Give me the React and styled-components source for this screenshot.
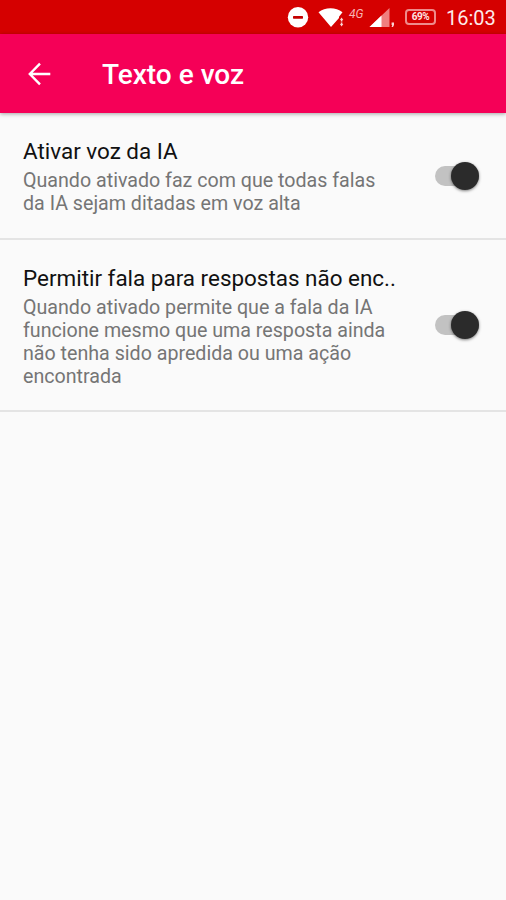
import React, { useState } from "react";
import styled, { createGlobalStyle } from "styled-components";

const settings = [
  {
    id: "voice",
    title: "Ativar voz da IA",
    lines: ["Quando ativado faz com que todas falas", "da IA sejam ditadas em voz alta"],
    height: 127,
  },
  {
    id: "fallback",
    title: "Permitir fala para respostas não enc..",
    lines: [
      "Quando ativado permite que a fala da IA",
      "funcione mesmo que uma resposta ainda",
      "não tenha sido apredida ou uma ação",
      "encontrada",
    ],
    height: 172,
  },
];

const SettingRow = ({ title, lines, height }) => {
  const [on, setOn] = useState(true);
  return (
    <Row $height={height}>
      <RowText>
        <RowTitle>{title}</RowTitle>
        {lines.map((line) => (
          <RowLine key={line}>{line}</RowLine>
        ))}
      </RowText>
      <Switch role="switch" aria-checked={on} aria-label={title} onClick={() => setOn(!on)}>
        <Track $on={on}>
          <Thumb />
        </Track>
      </Switch>
    </Row>
  );
};

const App = () => {
  return (
    <Screen>
      <GlobalStyle />
      <StatusBar>
        <DisturbIcon width="22" height="22" viewBox="0 0 22 22">
          <circle cx="11" cy="11.3" r="10.2" fill="#fff" />
          <rect x="6" y="9.9" width="10" height="2.8" rx="0.6" fill="#c40000" />
        </DisturbIcon>
        <WifiIcon width="27" height="20" viewBox="0 0 27 20">
          <path d="M0.5 5.2C7-0.2 18-0.2 24.5 5.2L21 9.8V11L13 20Z" fill="#fff" />
          <path d="M23.6 10.5L25.3 13H24.4V14.6H22.8V13H21.9ZM23.6 19.5L21.9 17H22.8V15.6H24.4V17H25.3Z" fill="#fbd5d5" />
        </WifiIcon>
        <Network>4G</Network>
        <SignalIcon width="27" height="20" viewBox="0 0 27 20">
          <path d="M20.5 1V20H0.5Z" fill="#f07f7f" />
          <path d="M12.5 8.6V20H0.5Z" fill="#fff" />
          <path d="M22.6 15.5H25V18L24 20H22.6L23.2 18H22.6Z" fill="#fbd5d5" />
        </SignalIcon>
        <Battery>69%</Battery>
        <Clock>16:03</Clock>
      </StatusBar>
      <Header>
        <BackButton aria-label="Voltar">
          <svg width="24" height="24" viewBox="0 0 24 24" fill="none" stroke="#fff" strokeWidth="2.4">
            <path d="M23.3 12H3M13 1.6L2.8 12L13 22.4" />
          </svg>
        </BackButton>
        <HeaderTitle>Texto e voz</HeaderTitle>
      </Header>
      <main>
        {settings.map((item) => (
          <SettingRow key={item.id} {...item} />
        ))}
      </main>
    </Screen>
  );
};

export default App;

const GlobalStyle = createGlobalStyle`
  * {
    box-sizing: border-box;
  }

  body {
    margin: 0;
    background: #fafafa;
    font-family: Roboto, "Liberation Sans", sans-serif;
  }

  button {
    border: 0;
    padding: 0;
    background: none;
  }
`;

const Screen = styled.div`
  width: 506px;
  height: 900px;
  background: #fafafa;
  overflow: hidden;
`;

const StatusBar = styled.div`
  display: flex;
  align-items: center;
  height: 34px;
  padding-left: 287px;
  background: #d50000;
  color: #fff;
`;

const DisturbIcon = styled.svg`
  flex: none;
  margin-right: 9px;
`;

const WifiIcon = styled.svg`
  flex: none;
  margin-right: 4px;
`;

const Network = styled.span`
  width: 17px;
  margin: 0 3px 6px 0;
  color: #f7b4b4;
  font-size: 12px;
  font-style: italic;
  line-height: 12px;
`;

const SignalIcon = styled.svg`
  flex: none;
  margin-right: 9px;
`;

const Battery = styled.div`
  display: flex;
  flex: none;
  align-items: center;
  justify-content: center;
  width: 31px;
  height: 16px;
  margin-right: 10px;
  border: 2px solid #ee8c8c;
  border-radius: 4px;
  color: #fde4e4;
  font-size: 10px;
  font-weight: 700;
  letter-spacing: -0.5px;
  line-height: 10px;
`;

const Clock = styled.span`
  padding-top: 2px;
  color: #fdeaea;
  font-size: 20px;
  line-height: 24px;
`;

const Header = styled.header`
  display: flex;
  align-items: center;
  height: 79px;
  padding-left: 27px;
  background: #f50057;
  box-shadow: 0 1px 4px rgba(0, 0, 0, 0.35);
`;

const BackButton = styled.button`
  display: flex;
  width: 24px;
  height: 24px;
  margin-right: 51px;
`;

const HeaderTitle = styled.h1`
  margin: 2px 0 0;
  color: #fff;
  font-size: 28px;
  font-weight: 500;
  line-height: 32px;
`;

const Row = styled.section`
  display: flex;
  align-items: center;
  justify-content: space-between;
  height: ${(props) => props.$height}px;
  padding: 0 27px 0 23px;
  border-bottom: 2px solid #e4e4e4;
`;

const RowText = styled.div`
  padding-top: 1px;
  white-space: nowrap;
`;

const RowTitle = styled.h2`
  margin: 0 0 4px;
  color: #111;
  font-size: 22.45px;
  font-weight: 400;
  line-height: 28px;
`;

const RowLine = styled.div`
  color: #757575;
  font-size: 19.65px;
  line-height: 23px;
`;

const Switch = styled.button`
  display: flex;
  flex: none;
  align-items: center;
  width: 44px;
  height: 28px;
`;

const Track = styled.span`
  display: flex;
  align-items: center;
  justify-content: ${(props) => (props.$on ? "flex-end" : "flex-start")};
  width: 44px;
  height: 20px;
  border-radius: 10px;
  background: #c2c2c2;
`;

const Thumb = styled.span`
  flex: none;
  width: 28px;
  height: 28px;
  border-radius: 50%;
  background: #2b2b2b;
  box-shadow: 0 1px 3px rgba(0, 0, 0, 0.5);
`;
